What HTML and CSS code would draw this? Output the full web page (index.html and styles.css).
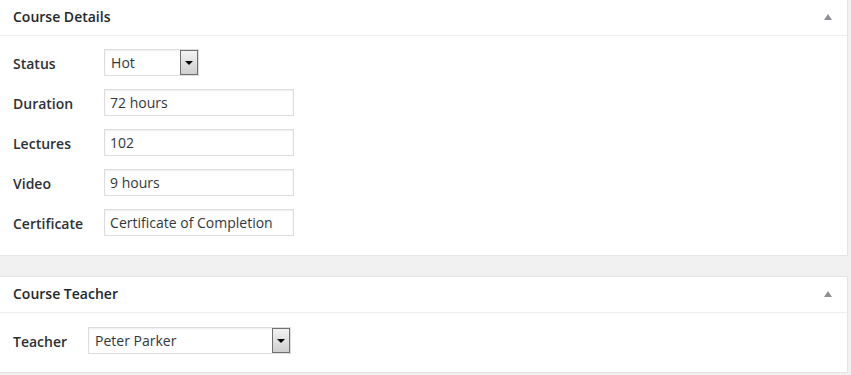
FILE: index.html
```html
<!DOCTYPE html>
<html lang="en">
<head>
    <meta charset="UTF-8">
    <title>Course Meta</title>
    <link rel="stylesheet" href="styles.css">
</head>
<body>
    <div class="postbox">
        <div class="postbox-header">
            <h2>Course Details</h2>
            <span class="toggle-indicator"></span>
        </div>
        <div class="inside">
            <div class="meta-grid">
                <label>Status</label>
                <div class="select select-status">
                    <span>Hot</span>
                    <span class="select-arrow"></span>
                </div>

                <label>Duration</label>
                <input type="text" value="72 hours">

                <label>Lectures</label>
                <input type="text" value="102">

                <label>Video</label>
                <input type="text" value="9 hours">

                <label>Certificate</label>
                <input type="text" value="Certificate of Completion">
            </div>
        </div>
    </div>

    <div class="postbox postbox-teacher">
        <div class="postbox-header">
            <h2>Course Teacher</h2>
            <span class="toggle-indicator"></span>
        </div>
        <div class="inside inside-teacher">
            <div class="meta-grid">
                <label>Teacher</label>
                <div class="select select-teacher">
                    <span>Peter Parker</span>
                    <span class="select-arrow"></span>
                </div>
            </div>
        </div>
    </div>
</body>
</html>
```

FILE: styles.css
```css
* {
    margin: 0;
    padding: 0;
    box-sizing: border-box;
}

body {
    font-family: "Open Sans", "Liberation Sans", sans-serif;
    background: #f1f1f1;
    color: #23282d;
    font-size: 14px;
    width: 848px;
}

.postbox {
    background: #fff;
    border: 1px solid #e5e5e5;
    border-top: none;
    border-left: none;
}

.postbox-teacher {
    margin-top: 20px;
    border-top: 1px solid #e5e5e5;
}

.postbox-header {
    display: flex;
    align-items: center;
    justify-content: space-between;
    height: 36px;
    padding: 0 14px 2px 13px;
    border-bottom: 1px solid #eee;
}

.postbox-header h2 {
    font-size: 14px;
    font-weight: 600;
    color: #23282d;
}

.toggle-indicator {
    width: 0;
    height: 0;
    border-left: 4px solid transparent;
    border-right: 4px solid transparent;
    border-bottom: 6px solid #8c8f94;
    margin-right: 1px;
}

.inside {
    padding: 13px 13px 19px;
}

.inside-teacher {
    padding: 14px 13px 18px;
}

.meta-grid {
    display: grid;
    grid-template-columns: max-content max-content;
    column-gap: 21px;
    row-gap: 13px;
    align-items: center;
}

.meta-grid label {
    font-weight: 600;
    font-size: 14px;
    color: #2c3136;
    padding-top: 1px;
}

input[type="text"] {
    width: 190px;
    height: 27px;
    border: 1px solid #ddd;
    box-shadow: inset 0 1px 2px rgba(0, 0, 0, 0.07);
    font-family: inherit;
    font-size: 14px;
    color: #32373c;
    padding: 0 5px;
    background: #fff;
    outline: none;
}

.select {
    display: flex;
    align-items: center;
    justify-content: space-between;
    height: 27px;
    border: 1px solid #ddd;
    box-shadow: inset 0 1px 2px rgba(0, 0, 0, 0.07);
    color: #32373c;
    padding-left: 6px;
    background: #fff;
}

.select-status {
    width: 95px;
}

.select-teacher {
    width: 203px;
}

.select-arrow {
    width: 18px;
    height: 25px;
    border: 1px solid #707070;
    background: linear-gradient(#f2f2f2, #cfcfcf);
    display: flex;
    align-items: center;
    justify-content: center;
}

.select-arrow::after {
    content: "";
    width: 0;
    height: 0;
    border-left: 4px solid transparent;
    border-right: 4px solid transparent;
    border-top: 4px solid #000;
}
```
